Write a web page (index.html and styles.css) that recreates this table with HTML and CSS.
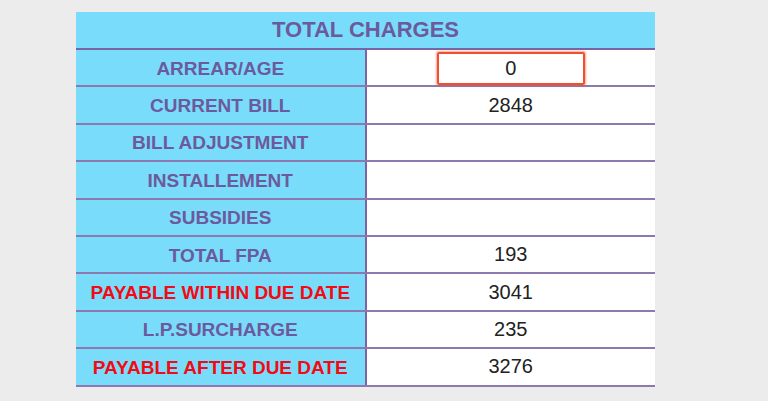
FILE: index.html
```html
<!DOCTYPE html>
<html>
<head>
<meta charset="utf-8">
<link rel="stylesheet" href="styles.css">
</head>
<body>
<div class="page">
  <table class="charges">
    <thead>
      <tr><th class="title" colspan="2">TOTAL CHARGES</th></tr>
    </thead>
    <tbody>
      <tr><td class="label">ARREAR/AGE</td><td class="value"><span class="input">0</span></td></tr>
      <tr><td class="label">CURRENT BILL</td><td class="value">2848</td></tr>
      <tr><td class="label">BILL ADJUSTMENT</td><td class="value"></td></tr>
      <tr><td class="label">INSTALLEMENT</td><td class="value"></td></tr>
      <tr><td class="label">SUBSIDIES</td><td class="value"></td></tr>
      <tr><td class="label">TOTAL FPA</td><td class="value">193</td></tr>
      <tr><td class="label red">PAYABLE WITHIN DUE DATE</td><td class="value">3041</td></tr>
      <tr><td class="label">L.P.SURCHARGE</td><td class="value">235</td></tr>
      <tr><td class="label red">PAYABLE AFTER DUE DATE</td><td class="value">3276</td></tr>
    </tbody>
  </table>
</div>
</body>
</html>
```

FILE: styles.css
```css
html, body {
  margin: 0;
  padding: 0;
  background: #ececec;
  width: 768px;
  height: 401px;
  overflow: hidden;
}
.page {
  padding: 12px 0 0 76px;
}
.charges {
  width: 579px;
  border-collapse: collapse;
  table-layout: fixed;
  font-family: "Liberation Sans", Arial, sans-serif;
}
.title {
  height: 36px;
  padding: 0;
  background: #7adcfb;
  color: #6b5a9c;
  font-size: 22px;
  font-weight: bold;
  text-align: center;
  border-bottom: 2px solid #7b64a4;
}
.charges td {
  height: 35.4px;
  padding: 0;
  text-align: center;
  border-bottom: 2px solid #8e78b0;
}
.charges td.label {
  width: 286px;
  padding-top: 2px;
  height: 33.4px;
  background: #7adcfb;
  color: #6b5a9c;
  font-size: 19px;
  font-weight: bold;
  border-right: 2px solid #7b64a4;
}
.charges td.label.red {
  color: #f20a14;
}
.value {
  background: #ffffff;
  color: #222222;
  font-size: 20px;
}
.input {
  display: inline-block;
  width: 144px;
  height: 29px;
  line-height: 29px;
  margin-top: 2px;
  border: 2px solid #f0502e;
  border-radius: 2px;
  box-shadow: 0 0 2px 1px rgba(240, 80, 46, 0.5);
}
```
